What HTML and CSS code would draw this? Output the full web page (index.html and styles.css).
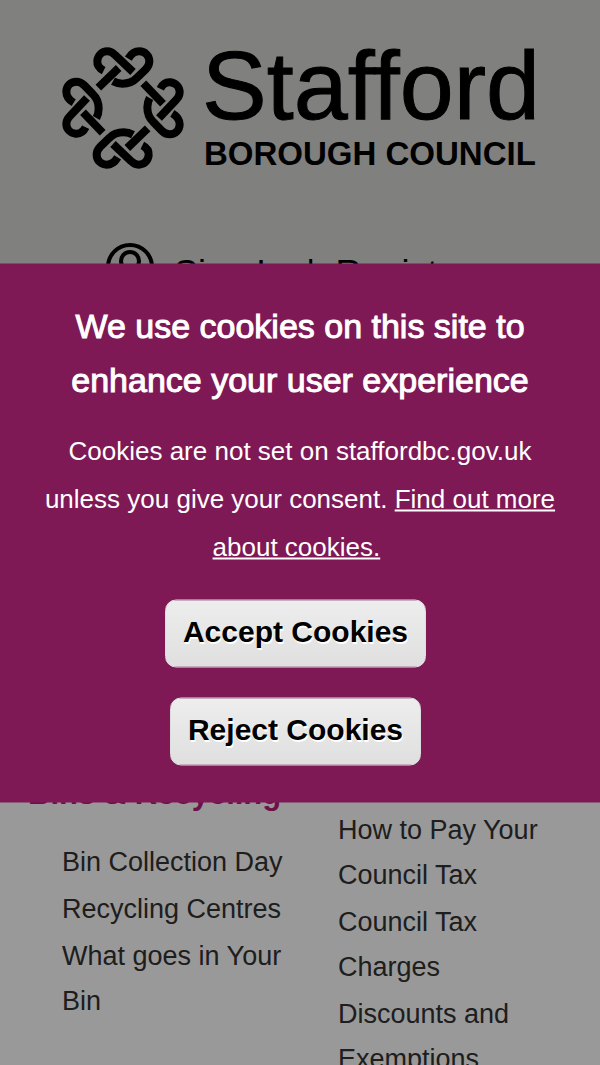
FILE: index.html
```
<!DOCTYPE html>
<html lang="en">
<head>
    <meta charset="UTF-8">
    <meta name="viewport" content="width=device-width, initial-scale=1.0">
    <title>Stafford Borough Council</title>
    <link rel="stylesheet" href="styles.css">
</head>
<body>
    <header class="header">
        <div class="logo">
            <svg class="logo-knot" viewBox="35 35 366 366" aria-hidden="true">
                <defs>
                    <g id="knot">
                        <path d="M160 106 C146 99 140 88 141 76 C143 60 154 48 171 48 C181 48 187 52 194 59 L248 110"/>
                        <path d="M234 70 C243 55 253 48 267 48 C284 48 297 61 297 78 C297 89 293 95 286 102 L259 128 C246 142 232 145 216 145 C205 145 197 143 188 138"/>
                        <path d="M205 98 L144 157"/>
                    </g>
                </defs>
                <use href="#knot"/>
                <use href="#knot" transform="rotate(90 218 218)"/>
                <use href="#knot" transform="rotate(180 218 218)"/>
                <use href="#knot" transform="rotate(270 218 218)"/>
            </svg>
            <div class="logo-text">
                <div class="logo-name">Stafford</div>
                <div class="logo-sub">BOROUGH COUNCIL</div>
            </div>
        </div>
        <div class="account">
            <svg class="account-icon" viewBox="0 0 48 48" aria-hidden="true">
                <circle cx="24" cy="24" r="22"/>
                <circle cx="24" cy="18" r="9"/>
                <path d="M9 39 C12 27 36 27 39 39"/>
            </svg>
            <div class="account-links">
                <a href="#">Sign In</a>
                <span class="divider">|</span>
                <a href="#">Register</a>
            </div>
        </div>
    </header>

    <main class="services">
        <section class="service bins">
            <h2>Bins &amp; Recycling</h2>
            <ul>
                <li><a href="#">Bin Collection Day</a></li>
                <li><a href="#">Recycling Centres</a></li>
                <li><a href="#">What goes in Your Bin</a></li>
            </ul>
        </section>
        <section class="service">
            <h2>Council Tax</h2>
            <ul>
                <li><a href="#">How to Pay Your Council Tax</a></li>
                <li><a href="#">Council Tax Charges</a></li>
                <li><a href="#">Discounts and Exemptions</a></li>
            </ul>
        </section>
    </main>

    <div class="overlay"></div>
    <div class="cookies" role="dialog" aria-labelledby="cookies-title">
        <h2 id="cookies-title">We use cookies on this site to enhance your user experience</h2>
        <p>Cookies are not set on staffordbc.gov.uk unless you give your consent. <a href="#">Find out more about cookies.</a>&nbsp;</p>
        <div class="cookies-buttons">
            <button type="button">Accept Cookies</button>
            <button type="button">Reject Cookies</button>
        </div>
    </div>
</body>
</html>
```

FILE: styles.css
```
*, *::before, *::after {
    box-sizing: border-box;
}
html, body {
    height: 100%;
}
body {
    margin: 0;
    overflow: hidden;
    background: #fff;
    color: #333;
    font-family: "Liberation Sans", Arial, sans-serif;
    font-size: 27px;
}
a {
    color: inherit;
    text-decoration: none;
}

/*--------- HEADER -------------*/
.header {
    padding: 47px 0 40px;
    background: #d5d5d3;
    color: #000;
}
.logo {
    display: flex;
    justify-content: center;
    gap: 18px;
    padding-left: 2px;
}
.logo-knot {
    width: 122px;
    height: 122px;
    fill: none;
    stroke: #000;
    stroke-width: 24px;
}
.logo-name {
    font-size: 97px;
    line-height: 78px;
    -webkit-text-stroke: 1px #000;
}
.logo-sub {
    padding: 11px 0 0 2px;
    font-size: 33px;
    font-weight: bold;
    line-height: 36px;
}
.account {
    display: flex;
    align-items: flex-end;
    gap: 20px;
    margin-top: 71px;
    padding-left: 106px;
}
.account-icon {
    width: 48px;
    height: 48px;
    fill: none;
    stroke: #000;
    stroke-width: 4px;
}
.account-links {
    font-size: 36px;
    line-height: 34px;
}
.divider {
    margin: 0 10px;
}

/*--------- SERVICES -------------*/
.services {
    display: grid;
    grid-template-columns: 1fr 1fr;
    padding: 408px 20px 0 28px;
}
.service {
    padding-right: 12px;
}
.service.bins {
    padding-top: 32px;
}
.service h2 {
    margin: 0 0 23px;
    color: #b91c7a;
    font-size: 31px;
    line-height: 46px;
    white-space: nowrap;
}
.service ul {
    margin: 0;
    padding: 0 0 0 34px;
    list-style: none;
    line-height: 45px;
}
.service li {
    margin-bottom: 2px;
}

/*--------- COOKIES -------------*/
.overlay {
    position: fixed;
    inset: 0;
    background: rgba(0, 0, 0, 0.4);
}
.cookies {
    position: fixed;
    top: 50%;
    left: 0;
    width: 100%;
    padding: 35px 30px 37px;
    transform: translateY(-50%);
    background: #7e1956;
    color: #fff;
    text-align: center;
}
.cookies h2 {
    margin: 0 0 20px;
    font-size: 34px;
    font-weight: normal;
    line-height: 54px;
    -webkit-text-stroke: 1px #fff;
}
.cookies p {
    margin: 0 0 29px;
    font-size: 26px;
    line-height: 48px;
}
.cookies p a {
    text-decoration: underline;
}
.cookies-buttons {
    display: flex;
    flex-direction: column;
    align-items: center;
    gap: 30px;
    padding-right: 9px;
}
.cookies button {
    height: 68px;
    padding: 0 17px 4px;
    border: 1px solid #ddd;
    border-radius: 11px;
    background: linear-gradient(#ededed, #dfdfdf);
    color: #000;
    font-family: inherit;
    font-size: 30px;
    font-weight: bold;
    text-shadow: 1px 2px 0 #fff;
    cursor: pointer;
}
```
